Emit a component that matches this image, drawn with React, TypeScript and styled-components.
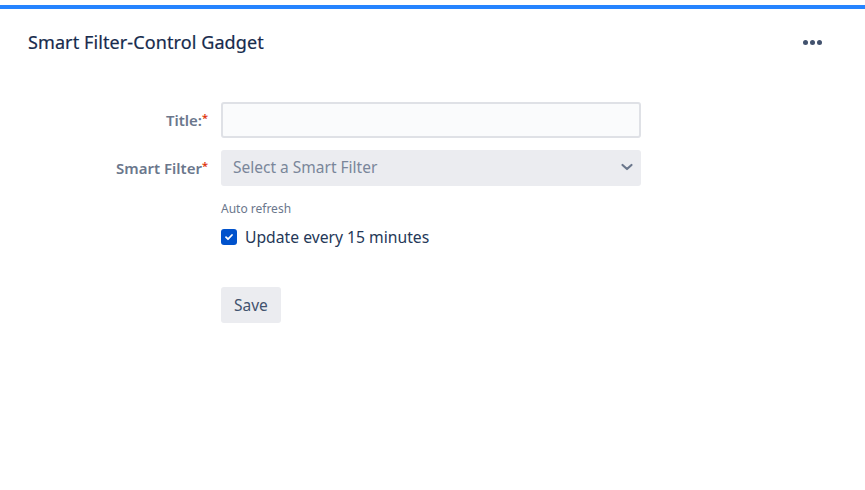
import {FC} from "react";
import styled, {createGlobalStyle} from "styled-components";

const GlobalStyle = createGlobalStyle`
	body {
		margin: 0;
		background: #ffffff;
		font-family: "Noto Sans", "Open Sans", sans-serif;
		color: #172b4d;
	}
`;

const Gadget = styled.div`
	padding-top: 5px;
	min-height: 490px;
	box-sizing: border-box;
`;

const AccentBar = styled.div`
	height: 4px;
	background: #2684ff;
`;

const Header = styled.div`
	display: flex;
	align-items: center;
	justify-content: space-between;
	height: 66px;
	padding: 0 43px 0 28px;
`;

const Title = styled.h1`
	margin: 0;
	font-size: 18px;
	font-weight: 400;
	color: #172b4d;
	letter-spacing: 0.1px;
	-webkit-text-stroke: 0.2px #172b4d;
`;

const MoreButton = styled.button`
	display: flex;
	gap: 2px;
	padding: 0;
	border: none;
	background: none;
	cursor: pointer;

	span {
		width: 5px;
		height: 5px;
		border-radius: 50%;
		background: #42526e;
	}
`;

const Form = styled.form`
	display: grid;
	grid-template-columns: 209px 420px;
	column-gap: 12px;
	row-gap: 12px;
	padding-top: 27px;
	align-items: center;
`;

const Label = styled.label`
	text-align: right;
	font-size: 15px;
	font-weight: 600;
	color: #6b778c;
	padding-right: 1px;

	em {
		font-style: normal;
		color: #de350b;
		font-size: 11px;
		vertical-align: top;
	}
`;

const TextInput = styled.input`
	box-sizing: border-box;
	height: 36px;
	width: 100%;
	border: 2px solid #dfe1e6;
	border-radius: 3px;
	background: #fafbfc;
	font: inherit;
	outline: none;
`;

const SelectBox = styled.div`
	box-sizing: border-box;
	height: 36px;
	display: flex;
	align-items: center;
	justify-content: space-between;
	padding: 0 6px 3px 12px;
	border-radius: 3px;
	background: #ebecf0;
	color: #7a869a;
	font-size: 15.5px;
`;

const Spacer = styled.div``;

const Options = styled.div`
	display: flex;
	flex-direction: column;
	padding-top: 2px;
`;

const Hint = styled.div`
	font-size: 12px;
	color: #6b778c;
	margin-bottom: 9px;
`;

const CheckRow = styled.label`
	display: flex;
	align-items: center;
	gap: 8px;
	font-size: 15.7px;
	color: #253858;
`;

const CheckBox = styled.span`
	width: 16px;
	height: 16px;
	border-radius: 3px;
	background: #0052cc;
	display: flex;
	align-items: center;
	justify-content: center;
`;

const SaveButton = styled.button`
	margin-top: 27px;
	justify-self: start;
	height: 36px;
	padding: 0 13px;
	border: none;
	border-radius: 3px;
	background: #ebecf0;
	color: #42526e;
	font: inherit;
	font-size: 15.5px;
	padding-bottom: 1px;
`;

const App: FC = () => {
	return (
		<Gadget>
			<GlobalStyle />
			<AccentBar />
			<Header>
				<Title>Smart Filter-Control Gadget</Title>
				<MoreButton type="button" aria-label="More">
					<span />
					<span />
					<span />
				</MoreButton>
			</Header>
			<Form>
				<Label>
					Title:<em>*</em>
				</Label>
				<TextInput />
				<Label>
					Smart Filter<em>*</em>
				</Label>
				<SelectBox>
					Select a Smart Filter
					<svg width="16" height="16" viewBox="0 0 16 16">
						<path
							d="M3.5 6l4.5 4 4.5-4"
							fill="none"
							stroke="#6b778c"
							strokeWidth="2.2"
							strokeLinecap="round"
							strokeLinejoin="round"
						/>
					</svg>
				</SelectBox>
				<Spacer />
				<Options>
					<Hint>Auto refresh</Hint>
					<CheckRow>
						<CheckBox>
							<svg width="10" height="10" viewBox="0 0 10 10">
								<path
									d="M2 5.2l2 2 4-4.2"
									fill="none"
									stroke="#fff"
									strokeWidth="1.8"
									strokeLinecap="round"
									strokeLinejoin="round"
								/>
							</svg>
						</CheckBox>
						Update every 15 minutes
					</CheckRow>
				</Options>
				<Spacer />
				<SaveButton type="button">Save</SaveButton>
			</Form>
		</Gadget>
	);
};

export default App;
